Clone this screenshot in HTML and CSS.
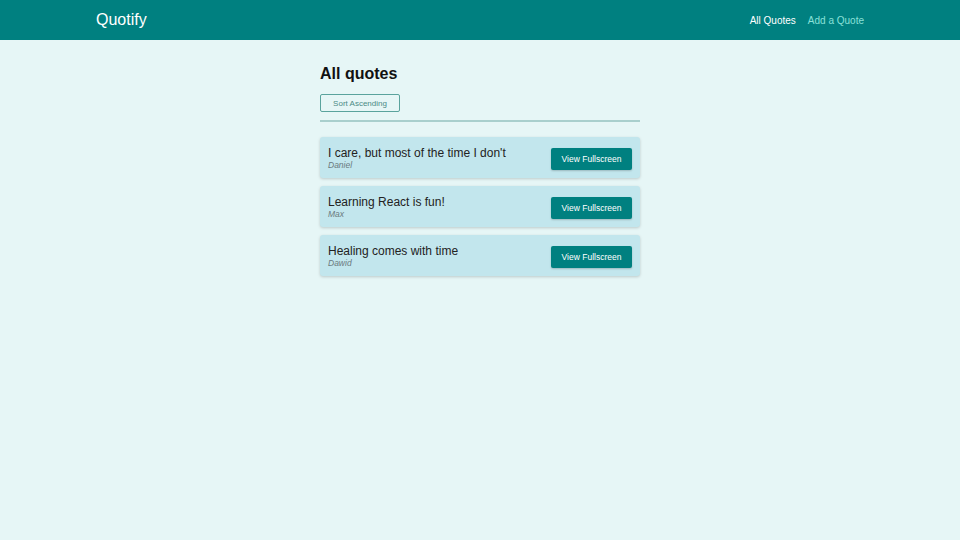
FILE: index.html
```html
<!DOCTYPE html>
<html>
<head>
<meta charset="utf-8">
<link rel="stylesheet" href="styles.css">
</head>
<body>
<header class="header">
  <div class="logo">Quotify</div>
  <nav class="nav">
    <a class="nav-link active">All Quotes</a>
    <a class="nav-link">Add a Quote</a>
  </nav>
</header>
<main class="main">
  <h1 class="title">All quotes</h1>
  <div class="sorting">
    <button class="sort-btn">Sort Ascending</button>
  </div>
  <ul class="list">
    <li class="item">
      <figure class="quote">
        <blockquote class="text">I care, but most of the time I don't</blockquote>
        <figcaption class="author">Daniel</figcaption>
      </figure>
      <a class="btn">View Fullscreen</a>
    </li>
    <li class="item">
      <figure class="quote">
        <blockquote class="text">Learning React is fun!</blockquote>
        <figcaption class="author">Max</figcaption>
      </figure>
      <a class="btn">View Fullscreen</a>
    </li>
    <li class="item">
      <figure class="quote">
        <blockquote class="text">Healing comes with time</blockquote>
        <figcaption class="author">Dawid</figcaption>
      </figure>
      <a class="btn">View Fullscreen</a>
    </li>
  </ul>
</main>
</body>
</html>
```
FILE: styles.css
```css
* { box-sizing: border-box; }
html, body {
  margin: 0;
  padding: 0;
  background: #e6f6f6;
  font-family: "Liberation Sans", Arial, sans-serif;
  width: 960px;
  height: 540px;
}
.header {
  height: 40px;
  background: #008080;
  display: flex;
  align-items: center;
  justify-content: space-between;
  padding: 0 96px;
}
.logo {
  color: #ffffff;
  font-size: 16px;
  margin-top: -1px;
}
.nav {
  display: flex;
  gap: 12px;
}
.nav-link {
  font-size: 10px;
  color: #8ae0d8;
}
.nav-link.active {
  color: #ffffff;
}
.main {
  width: 320px;
  margin: 0 auto;
  padding-top: 25px;
}
.title {
  font-size: 16px;
  font-weight: bold;
  color: #111;
  margin: 0;
  line-height: 18px;
}
.sorting {
  margin-top: 11px;
  padding-bottom: 8px;
  border-bottom: 2px solid #a9cfcd;
}
.sort-btn {
  font-family: "Liberation Sans", Arial, sans-serif;
  font-size: 8px;
  color: #4b8a85;
  background: transparent;
  border: 1px solid #5aa39d;
  border-radius: 2px;
  width: 80px;
  height: 18px;
  padding: 0;
  display: block;
}
.list {
  list-style: none;
  margin: 15px 0 0;
  padding: 0;
  display: flex;
  flex-direction: column;
  gap: 8px;
}
.item {
  height: 41px;
  background: #c2e6ed;
  border-radius: 3px;
  box-shadow: 0 1px 3px rgba(0, 0, 0, 0.18);
  display: flex;
  align-items: center;
  justify-content: space-between;
  padding: 0 8px;
}
.quote {
  margin: 0;
}
.text {
  margin: 0;
  font-size: 12px;
  line-height: 14px;
  color: #222;
}
.author {
  font-size: 8.5px;
  font-style: italic;
  color: #6a7a7e;
  line-height: 10px;
}
.btn {
  width: 81px;
  height: 22px;
  margin-top: 2px;
  background: #008080;
  color: #ffffff;
  font-size: 8.5px;
  display: flex;
  align-items: center;
  justify-content: center;
  border-radius: 2px;
  box-shadow: 0 1px 2px rgba(0,0,0,0.2);
}
```
